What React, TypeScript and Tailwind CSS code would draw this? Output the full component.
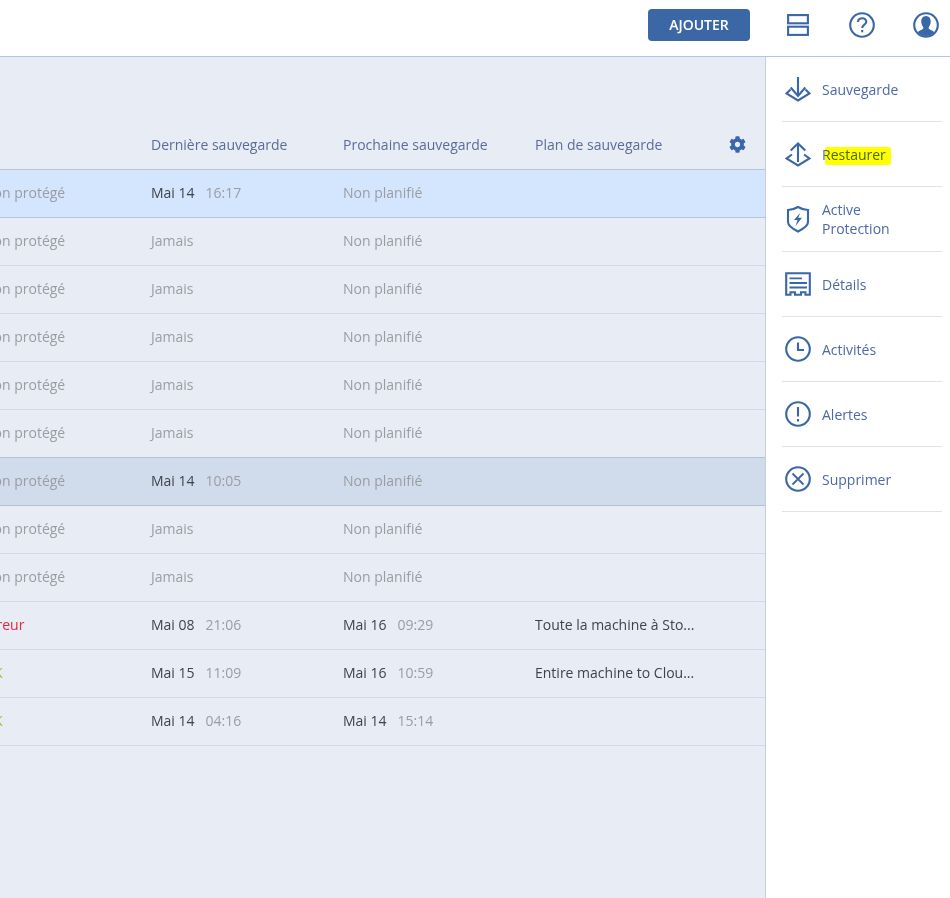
import React from "react";
import { FaCog } from "react-icons/fa";

type Row = {
  status: string;
  statusClass: string;
  last: string;
  lastTime?: string;
  next: string;
  nextTime?: string;
  plan?: string;
  rowClass: string;
};

const idle = "border-[#d3d9e7]";
const np = { status: "Non protégé", statusClass: "text-[#9b9da3]", next: "Non planifié" };

const rows: Row[] = [
  { ...np, last: "Mai 14", lastTime: "16:17", rowClass: "bg-[#d4e5fe] border-[#b5c5dc]" },
  { ...np, last: "Jamais", rowClass: idle },
  { ...np, last: "Jamais", rowClass: idle },
  { ...np, last: "Jamais", rowClass: idle },
  { ...np, last: "Jamais", rowClass: idle },
  { ...np, last: "Jamais", rowClass: "border-[#b5c0d2]" },
  { ...np, last: "Mai 14", lastTime: "10:05", rowClass: "bg-[#d0dcec] border-[#b5c0d2]" },
  { ...np, last: "Jamais", rowClass: idle },
  { ...np, last: "Jamais", rowClass: idle },
  { status: "Erreur", statusClass: "text-[#e8263f]", last: "Mai 08", lastTime: "21:06", next: "Mai 16", nextTime: "09:29", plan: "Toute la machine à Sto...", rowClass: idle },
  { status: "OK", statusClass: "text-[#9bc225]", last: "Mai 15", lastTime: "11:09", next: "Mai 16", nextTime: "10:59", plan: "Entire machine to Clou...", rowClass: idle },
  { status: "OK", statusClass: "text-[#9bc225]", last: "Mai 14", lastTime: "04:16", next: "Mai 14", nextTime: "15:14", rowClass: idle },
];

function DateCell({ date, time }: { date: string; time?: string }) {
  if (!time) {
    return <div className="w-[192px] text-[#9b9da3]">{date}</div>;
  }
  return (
    <div className="w-[192px] flex gap-[11px]">
      <span className="text-[#40434a]">{date}</span>
      <span className="text-[#9b9da3]">{time}</span>
    </div>
  );
}

const ic = "#3a67a8";
const sw = "2.1";

function BackupIcon() {
  return (
    <svg width="26" height="26" viewBox="0 0 26 26" fill="none" stroke={ic} strokeWidth={sw}>
      <path d="M13 1V20" />
      <path d="M5.7 11.5L13 20L20.3 11.5" />
      <path d="M5.5 13.5L1.5 17.5L13 24.5L24.5 17.5L20.5 13.5" />
    </svg>
  );
}

function RestoreIcon() {
  return (
    <svg width="26" height="26" viewBox="0 0 26 26" fill="none" stroke={ic} strokeWidth={sw}>
      <path d="M13 2.5V21" />
      <path d="M5.7 9.5L13 2.5L20.3 9.5" />
      <path d="M7 13.5L1.5 17.5L13 24.5L24.5 17.5L19 13.5" />
    </svg>
  );
}

function ShieldIcon() {
  return (
    <svg width="26" height="28" viewBox="0 0 26 28" fill="none" stroke={ic} strokeWidth={sw}>
      <path d="M3 5C7 4.8 10 3.8 13 2C16 3.8 19 4.8 23 5V17C23 21 18 24 13 26.5C8 24 3 21 3 17Z" />
      <path d="M15.5 7.5L9 15H12.5L10.5 21L17 12.8H13.2Z" fill={ic} stroke="none" />
    </svg>
  );
}

function DetailsIcon() {
  return (
    <svg width="26" height="24" viewBox="0 0 26 24" fill="none" stroke={ic} strokeWidth={sw}>
      <path d="M1.2 1.2H24.8V22.8H20.5V20.3H16V22.8H10V20.3H5.5V22.8H1.2Z" />
      <path d="M4.5 6.3H17M4.5 11H22M4.5 15.5H22" strokeWidth="1.8" />
    </svg>
  );
}

function ClockIcon() {
  return (
    <svg width="26" height="26" viewBox="0 0 26 26" fill="none" stroke={ic} strokeWidth={sw}>
      <circle cx="13" cy="13" r="11.8" />
      <path d="M13 6.5V14H19" />
    </svg>
  );
}

function AlertIcon() {
  return (
    <svg width="26" height="26" viewBox="0 0 26 26" fill="none" stroke={ic} strokeWidth={sw}>
      <circle cx="13" cy="13" r="11.8" />
      <path d="M13 6V15.5M13 18V20.5" />
    </svg>
  );
}

function DeleteIcon() {
  return (
    <svg width="26" height="26" viewBox="0 0 26 26" fill="none" stroke={ic} strokeWidth={sw}>
      <circle cx="13" cy="13" r="11.8" />
      <path d="M7.5 7.5L18.5 18.5M18.5 7.5L7.5 18.5" strokeWidth="1.8" />
    </svg>
  );
}

function LayoutIcon() {
  return (
    <svg width="22" height="22" viewBox="0 0 22 22" fill="none" stroke={ic} strokeWidth={sw}>
      <rect x="1.1" y="1.1" width="19.8" height="8.2" />
      <rect x="1.1" y="12.7" width="19.8" height="8.2" />
    </svg>
  );
}

function HelpIcon() {
  return (
    <svg width="26" height="26" viewBox="0 0 26 26" fill="none" stroke={ic} strokeWidth={sw}>
      <circle cx="13" cy="13" r="11.8" />
      <path d="M9 10C9 7.5 11 6.2 13.2 6.2C15.6 6.2 17.3 7.8 17.3 9.8C17.3 12.6 13.2 12.8 13.2 16" />
      <path d="M13.2 18V20.3" />
    </svg>
  );
}

function UserIcon() {
  return (
    <svg width="26" height="26" viewBox="0 0 26 26" fill="none">
      <circle cx="13" cy="13" r="11.8" stroke={ic} strokeWidth={sw} />
      <path
        d="M13 4C9.8 4 8 6.8 8.3 10C8.5 12.5 9.3 14 10.3 15.2C10.6 16.8 9.5 17.5 7.5 18.3C6 18.9 5.2 19.5 4.9 20.5C6.8 22.8 9.7 24 13 24C16.3 24 19.2 22.8 21.1 20.5C20.8 19.5 20 18.9 18.5 18.3C16.5 17.5 15.4 16.8 15.7 15.2C16.7 14 17.5 12.5 17.7 10C18 6.8 16.2 4 13 4Z"
        fill={ic}
      />
    </svg>
  );
}

const actions: { label: React.ReactNode; icon: React.ReactNode; highlight?: boolean }[] = [
  { label: "Sauvegarde", icon: <BackupIcon /> },
  { label: "Restaurer", icon: <RestoreIcon />, highlight: true },
  { label: <>Active<br />Protection</>, icon: <ShieldIcon /> },
  { label: "Détails", icon: <DetailsIcon /> },
  { label: "Activités", icon: <ClockIcon /> },
  { label: "Alertes", icon: <AlertIcon /> },
  { label: "Supprimer", icon: <DeleteIcon /> },
];

export default function App() {
  return (
    <div className="h-screen w-full overflow-hidden flex flex-col bg-white text-[14px] font-['Open_Sans',sans-serif]">
      <header className="h-[57px] shrink-0 border-b border-[#b5c7e0] flex items-center justify-end pb-[6px]">
        <button className="w-[102px] h-[32px] pb-[2px] mr-[37px] rounded-[4px] bg-[#3b67a6] text-white font-semibold">
          AJOUTER
        </button>
        <div className="mr-[40px]"><LayoutIcon /></div>
        <div className="mr-[38px]"><HelpIcon /></div>
        <div className="mr-[11px]"><UserIcon /></div>
      </header>
      <div className="flex-1 flex min-h-0">
        <main className="w-[765px] bg-[#e8ecf5] overflow-hidden">
          <div className="h-[113px] border-b border-[#b5c5dc] flex items-end pb-[15px] pl-[151px] text-[#5a6d9a] leading-[19px]">
            <div className="w-[192px]">Dernière sauvegarde</div>
            <div className="w-[192px]">Prochaine sauvegarde</div>
            <div className="flex-1">Plan de sauvegarde</div>
            <FaCog className="w-[17px] h-[17px] mr-[19px] mb-[1px] text-[#3a67a8]" />
          </div>
          {rows.map((r, i) => (
            <div key={i} className={`h-12 border-b pb-[2px] flex items-center whitespace-nowrap ${r.rowClass}`}>
              <div className="w-[151px]">
                <div className={`ml-[-17px] ${r.statusClass}`}>{r.status}</div>
              </div>
              <DateCell date={r.last} time={r.lastTime} />
              <DateCell date={r.next} time={r.nextTime} />
              <div className="text-[#40434a]">{r.plan}</div>
            </div>
          ))}
        </main>
        <aside className="flex-1 border-l border-[#c3cfe0] pl-4 pr-2">
          {actions.map((a, i) => (
            <div key={i} className="relative h-[65px] border-b border-[#e2e2e2] flex items-center text-[#4d6aa6] leading-[19px]">
              <div className="w-[40px] pl-[3px] flex items-center shrink-0">{a.icon}</div>
              <div>{a.label}</div>
              {a.highlight && (
                <div className="absolute left-[43px] top-[25px] w-[66px] h-[18px] bg-[#ffff00] mix-blend-multiply rounded-[2px]" />
              )}
            </div>
          ))}
        </aside>
      </div>
    </div>
  );
}
